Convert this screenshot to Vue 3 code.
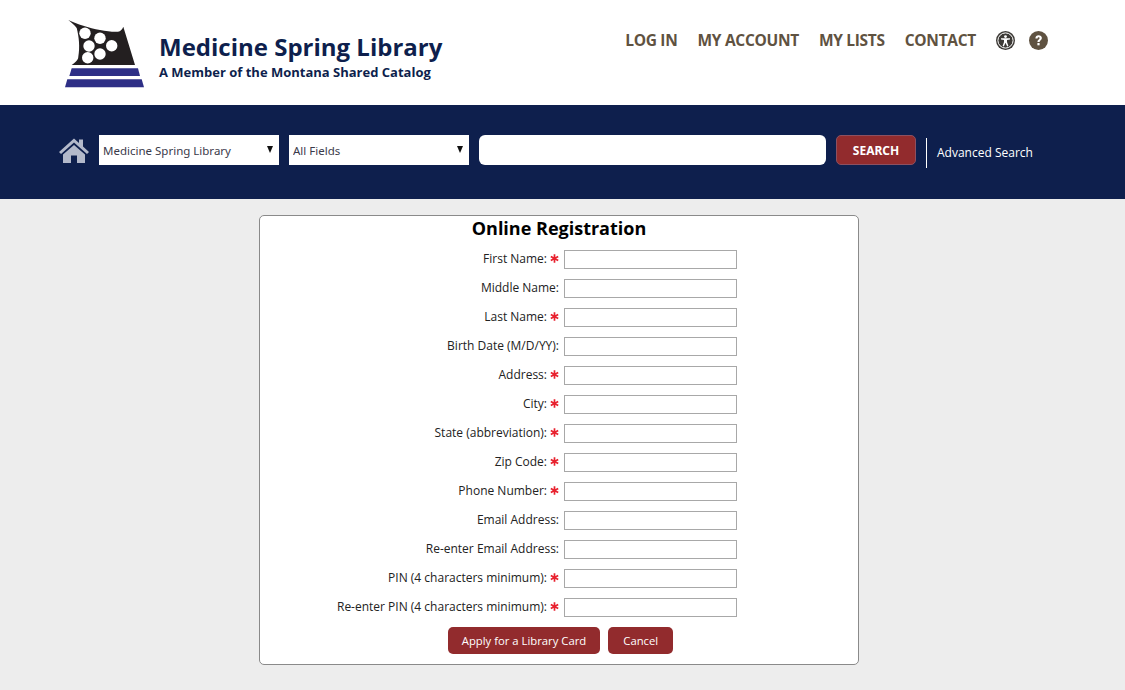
<script setup>
const fields = [
  { label: 'First Name:', required: true },
  { label: 'Middle Name:', required: false },
  { label: 'Last Name:', required: true },
  { label: 'Birth Date (M/D/YY):', required: false },
  { label: 'Address:', required: true },
  { label: 'City:', required: true },
  { label: 'State (abbreviation):', required: true },
  { label: 'Zip Code:', required: true },
  { label: 'Phone Number:', required: true },
  { label: 'Email Address:', required: false },
  { label: 'Re-enter Email Address:', required: false },
  { label: 'PIN (4 characters minimum):', required: true },
  { label: 'Re-enter PIN (4 characters minimum):', required: true }
]
</script>

<template>
  <div class="page">
    <header class="header">
      <div class="brand">
        <svg class="logo" width="80" height="70" viewBox="0 0 80 70">
          <path d="M3.3 1 C12 5 24 9 35 11 C42 12.4 48 13 53 12.7 C55.5 12.4 57.5 10 58.3 7.7 L70 46 L6.7 46 C10.5 43 13.3 41 13.3 37.7 C15 28 14 18 11.7 9 C9.5 6 6 3 3.3 1 Z" fill="#231f20" />
          <circle cx="20" cy="14.3" r="5.7" fill="#fff" />
          <circle cx="35" cy="19.3" r="5.7" fill="#fff" />
          <circle cx="24" cy="27" r="5.7" fill="#fff" />
          <circle cx="46.7" cy="26.7" r="5.7" fill="#fff" />
          <circle cx="35" cy="35" r="5.7" fill="#fff" />
          <circle cx="22.7" cy="38.7" r="5.7" fill="#fff" />
          <path d="M6.7 49.3 L73 49.3 L75 57 L4.3 57 Z" fill="#2e2f86" />
          <path d="M2.3 60.3 L76.7 60.3 L79 68.3 L0 68.3 Z" fill="#2e2f86" />
        </svg>
        <div class="brand-text">
          <div class="brand-name">Medicine Spring Library</div>
          <div class="brand-sub">A Member of the Montana Shared Catalog</div>
        </div>
      </div>
      <nav class="nav">
        <a>LOG IN</a>
        <a>MY ACCOUNT</a>
        <a>MY LISTS</a>
        <a>CONTACT</a>
        <svg class="nav-icon first-icon" width="19" height="19" viewBox="0 0 19 19">
          <circle cx="9.5" cy="9.5" r="9.5" fill="#3d3a36" />
          <circle cx="9.5" cy="9.5" r="7.6" fill="none" stroke="#fff" stroke-width="1" />
          <circle cx="9.5" cy="5.6" r="1.4" fill="#fff" />
          <path d="M5 7.2 L14 7.2 L14 8.4 L11 9 L11 11 L12.4 15 L11.2 15.4 L9.5 11.8 L7.8 15.4 L6.6 15 L8 11 L8 9 L5 8.4 Z" fill="#fff" />
        </svg>
        <svg class="nav-icon" width="19" height="19" viewBox="0 0 19 19">
          <circle cx="9.5" cy="9.5" r="9.5" fill="#5f5241" />
          <path d="M6.4 7.4 C6.4 5.4 7.8 4.2 9.6 4.2 C11.5 4.2 12.9 5.4 12.9 7.1 C12.9 9.2 10.6 9.4 10.6 11 L8.4 11 C8.4 8.6 10.6 8.4 10.6 7.2 C10.6 6.6 10.2 6.2 9.6 6.2 C9 6.2 8.6 6.7 8.6 7.4 Z" fill="#fff" />
          <rect x="8.4" y="12" width="2.2" height="2.3" fill="#fff" />
        </svg>
      </nav>
    </header>

    <div class="search-bar">
      <svg class="home" width="30" height="25" viewBox="0 0 30 25">
        <path d="M15 0.5 L20 5 L20 1.5 L24 1.5 L24 8.6 L30 14 L28 16 L15 4.6 L2 16 L0 14 Z" fill="#b3b9ca" />
        <path d="M15 7 L26 16.6 L26 25 L18 25 L18 17.5 L12 17.5 L12 25 L4 25 L4 16.6 Z" fill="#b3b9ca" />
      </svg>
      <div class="select-wrap">
        <select class="select">
          <option>Medicine Spring Library</option>
        </select>
      </div>
      <div class="select-wrap">
        <select class="select">
          <option>All Fields</option>
        </select>
      </div>
      <input class="search-input" type="text" />
      <button class="search-btn">SEARCH</button>
      <a class="advanced">Advanced Search</a>
    </div>

    <main class="main">
      <form class="card" @submit.prevent>
        <h1 class="title">Online Registration</h1>
        <div class="rows">
          <div v-for="field in fields" :key="field.label" class="row">
            <label class="label">
              <span class="label-text">{{ field.label }}</span>
              <svg v-if="field.required" class="star" width="9" height="9" viewBox="0 0 9 9">
                <path d="M4.5 0.3 V8.7 M0.8 2.4 L8.2 6.6 M8.2 2.4 L0.8 6.6" stroke="#e8212e" stroke-width="1.7" />
              </svg>
            </label>
            <input class="text-input" type="text" />
          </div>
        </div>
        <div class="actions">
          <button class="btn">Apply for a Library Card</button>
          <button class="btn btn-cancel">Cancel</button>
        </div>
      </form>
    </main>
  </div>
</template>

<style>
html, body {
  margin: 0;
  background: #ededed;
}
</style>

<style scoped>
.page {
  width: 1125px;
  height: 690px;
  overflow: hidden;
  background: #ededed;
  font-family: "Open Sans", "Liberation Sans", sans-serif;
}

.header {
  height: 105px;
  background: #fff;
  display: flex;
  justify-content: space-between;
  box-sizing: border-box;
  padding: 0 77px 0 65px;
}

.brand {
  display: flex;
  align-items: flex-start;
  padding-top: 19px;
}

.logo {
  flex: none;
}

.brand-text {
  margin: 13px 0 0 14px;
  color: #0e1f4d;
}

.brand-name {
  font-size: 24px;
  font-weight: 700;
  line-height: 30px;
}

.brand-sub {
  font-size: 13px;
  font-weight: 700;
  line-height: 20px;
}

.nav {
  display: flex;
  align-items: center;
  height: 80px;
  gap: 20px;
  color: #5f5241;
  font-size: 15.5px;
  font-weight: 700;
  letter-spacing: -0.3px;
}

.nav a {
  margin-top: -1px;
}

.nav-icon {
  margin-left: -6px;
}

.first-icon {
  margin-left: 0;
}

.search-bar {
  height: 94px;
  background: #0e1f4d;
  display: flex;
  align-items: center;
  box-sizing: border-box;
  padding: 0 0 0 59px;
}

.home {
  flex: none;
  margin-right: 10px;
  margin-top: -3px;
}

.select-wrap {
  position: relative;
  width: 180px;
  height: 30px;
  margin-right: 10px;
  margin-top: -5px;
}

.select-wrap::after {
  content: "";
  position: absolute;
  right: 6px;
  top: 11px;
  border-left: 3.5px solid transparent;
  border-right: 3.5px solid transparent;
  border-top: 7px solid #111;
}

.select {
  width: 100%;
  height: 100%;
  appearance: none;
  border: 0;
  border-radius: 0;
  background: #fff;
  padding: 1px 4px 0;
  font-family: "Noto Sans", "Open Sans", sans-serif;
  font-size: 11.5px;
  color: #3a3a4a;
}

.search-input {
  width: 347px;
  height: 30px;
  box-sizing: border-box;
  border: 0;
  border-radius: 6px;
  background: #fff;
  margin-right: 10px;
  margin-top: -5px;
}

.search-btn {
  width: 80px;
  height: 30px;
  box-sizing: border-box;
  border: 1px solid #8d5060;
  border-radius: 5px;
  background: #922b2d;
  color: #fff;
  font-family: "Noto Sans", "Open Sans", sans-serif;
  font-size: 12px;
  font-weight: 700;
  margin-top: -5px;
  padding: 2px 0 0;
}

.advanced {
  margin-left: 10px;
  margin-top: 2px;
  padding-left: 10px;
  border-left: 1px solid #fff;
  height: 30px;
  line-height: 30px;
  color: #fff;
  font-size: 12px;
}

.main {
  display: flex;
  justify-content: center;
  padding-top: 16px;
  padding-right: 7px;
}

.card {
  width: 600px;
  height: 450px;
  box-sizing: border-box;
  background: #fff;
  border: 1px solid #8a8a8a;
  border-radius: 5px;
}

.title {
  margin: 0;
  text-align: center;
  font-size: 18px;
  font-weight: 700;
  line-height: 25px;
  color: #000;
}

.rows {
  display: flex;
  flex-direction: column;
  gap: 10px;
  margin-top: 9px;
}

.row {
  display: flex;
  height: 19px;
  align-items: center;
}

.label {
  width: 299px;
  flex: none;
  display: flex;
  justify-content: flex-end;
  align-items: center;
  gap: 3px;
  font-size: 12px;
  color: #222;
  white-space: nowrap;
}

.label-text {
  margin-bottom: 2px;
}

.star {
  flex: none;
  margin-bottom: 2px;
}

.text-input {
  margin-left: 5px;
  width: 173px;
  height: 19px;
  box-sizing: border-box;
  border: 1px solid #a8a8a8;
  background: #fff;
  padding: 0 2px;
}

.actions {
  display: flex;
  justify-content: center;
  gap: 8px;
  margin-top: 10px;
  padding-left: 3px;
}

.btn {
  height: 27px;
  padding: 0 14px;
  border: 0;
  border-radius: 5px;
  background: #922b2d;
  color: #fff;
  font-family: "Open Sans", sans-serif;
  font-size: 11.3px;
}

.btn-cancel {
  padding: 0 15px;
}
</style>
